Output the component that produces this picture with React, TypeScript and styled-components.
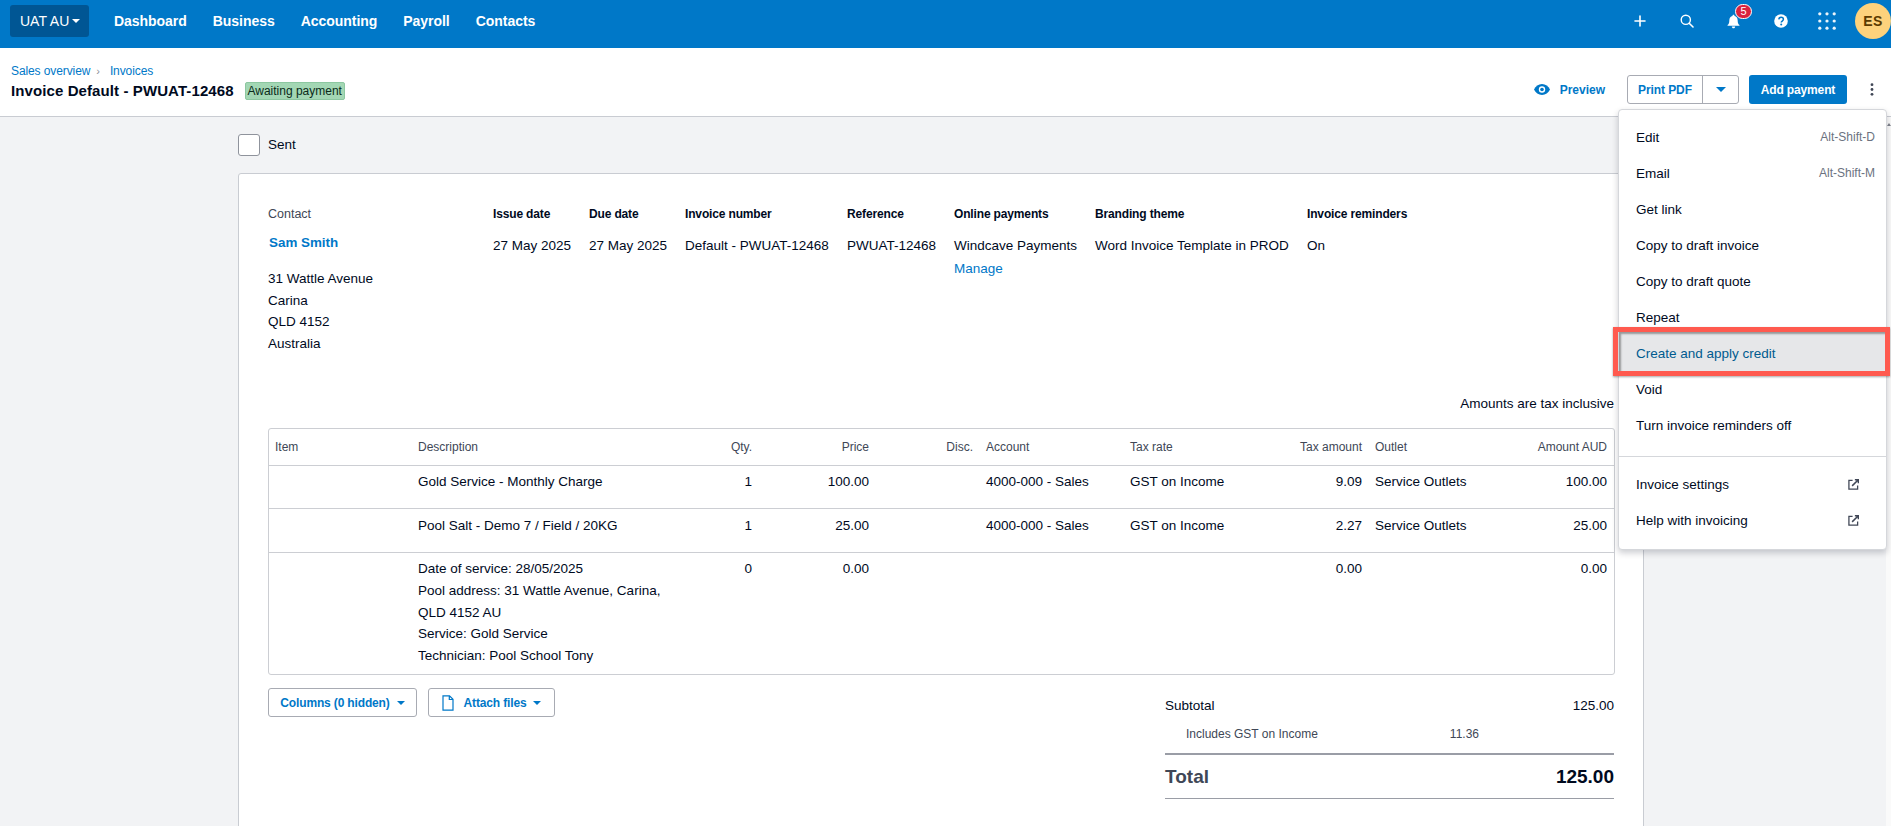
import React from "react";
import styled, { createGlobalStyle } from "styled-components";

const Global = createGlobalStyle`
  html, body { margin: 0; padding: 0; height: 100%; overflow: hidden; background: #f2f3f5; }
  body { font-family: "Liberation Sans", Arial, sans-serif; font-size: 13.5px; color: #000a1e; }
  * { box-sizing: border-box; }
`;

const Page = styled.div`
  position: relative;
  height: 826px;
  overflow: hidden;
`;

const TopBar = styled.header`
  height: 48px;
  background: #0078c8;
  display: flex;
  align-items: center;
  padding: 0 0 0 10px;
`;
const OrgButton = styled.div`
  width: 79px;
  height: 32px;
  margin-top: -6px;
  background: #005694;
  border-radius: 3px;
  color: #fff;
  font-size: 14px;
  display: flex;
  align-items: center;
  padding-left: 10px;
  gap: 3px;
`;
const CaretDown = styled.span<{ $color?: string; $size?: number }>`
  display: inline-block;
  width: 0;
  height: 0;
  border-left: ${(p) => p.$size ?? 4}px solid transparent;
  border-right: ${(p) => p.$size ?? 4}px solid transparent;
  border-top: ${(p) => p.$size ?? 4}px solid ${(p) => p.$color ?? "#fff"};
`;
const NavLinks = styled.nav`
  display: flex;
  margin-left: 25px;
  margin-top: -7px;
  gap: 26px;
`;
const NavLink = styled.a`
  color: #fff;
  font-size: 14px;
  font-weight: 700;
  letter-spacing: -0.04px;
`;
const TopIcons = styled.div`
  margin-left: auto;
  display: flex;
  align-items: center;
  height: 42px;
  margin-top: -6px;
`;
const IconSlot = styled.div<{ $w: number }>`
  position: relative;
  width: ${(p) => p.$w}px;
  height: 42px;
  display: flex;
  align-items: center;
  justify-content: center;
`;
const Badge = styled.span`
  position: absolute;
  top: 4px;
  left: 25px;
  width: 17px;
  height: 15px;
  border-radius: 8px;
  background: #d9233f;
  border: 1px solid #fff;
  color: #fff;
  font-size: 11px;
  line-height: 13px;
  text-align: center;
`;
const Avatar = styled.div`
  width: 36px;
  height: 36px;
  margin-left: 6px;
  border-radius: 50%;
  background: #fdd27c;
  color: #5b3a00;
  font-size: 14px;
  font-weight: 700;
  letter-spacing: 0.5px;
  display: flex;
  align-items: center;
  justify-content: center;
`;

const SubHeader = styled.div`
  height: 69px;
  background: #fff;
  border-bottom: 1px solid #c9ccd2;
  display: flex;
  align-items: flex-start;
  padding: 15px 0 0 11px;
`;
const TitleBlock = styled.div`
  display: flex;
  flex-direction: column;
`;
const Crumbs = styled.div`
  display: flex;
  align-items: center;
  font-size: 12px;
  line-height: 16px;
  letter-spacing: -0.1px;
  color: #0078c8;
`;
const CrumbSep = styled.span`
  color: #8a8f99;
  margin: 0 10px 0 6px;
  font-size: 11px;
`;
const TitleRow = styled.div`
  display: flex;
  align-items: center;
  margin-top: 3px;
`;
const Title = styled.h1`
  margin: 0;
  font-size: 15px;
  line-height: 18px;
  font-weight: 700;
  color: #000a1e;
  letter-spacing: 0.1px;
`;
const StatusBadge = styled.span`
  margin-left: 11px;
  width: 100px;
  height: 18px;
  background: #a3d7b4;
  border: 1px solid #8cc7a0;
  border-radius: 2px;
  font-size: 12px;
  line-height: 16px;
  text-align: center;
  color: #0b2b1a;
`;
const Actions = styled.div`
  margin-left: auto;
  display: flex;
  align-items: center;
  margin-top: 12px;
`;
const PreviewLink = styled.a`
  display: flex;
  align-items: center;
  gap: 10px;
  color: #0078c8;
  font-size: 12px;
  font-weight: 700;
  margin-right: 22px;
`;
const SplitButton = styled.div`
  display: flex;
  width: 112px;
  height: 29px;
  border: 1px solid #a8abb3;
  border-radius: 3px;
  background: #fff;
`;
const SplitMain = styled.div`
  width: 75px;
  display: flex;
  align-items: center;
  justify-content: center;
  color: #0078c8;
  font-size: 12px;
  font-weight: 700;
  letter-spacing: -0.1px;
  border-right: 1px solid #a8abb3;
`;
const SplitCaret = styled.div`
  flex: 1;
  display: flex;
  align-items: center;
  justify-content: center;
`;
const PrimaryButton = styled.div`
  margin-left: 10px;
  width: 98px;
  height: 29px;
  background: #0078c8;
  border-radius: 3px;
  color: #fff;
  font-size: 12px;
  font-weight: 700;
  letter-spacing: -0.15px;
  display: flex;
  align-items: center;
  justify-content: center;
`;
const Kebab = styled.div`
  width: 44px;
  height: 29px;
  padding-left: 6px;
  display: flex;
  align-items: center;
  justify-content: center;
`;

const Content = styled.main`
  padding: 17px 0 0 238px;
  width: 1644px;
`;
const SentRow = styled.label`
  display: flex;
  align-items: center;
  gap: 8px;
  height: 22px;
  font-size: 13.5px;
  line-height: 20px;
`;
const CheckBox = styled.span`
  width: 22px;
  height: 22px;
  background: #fff;
  border: 1px solid #8f939c;
  border-radius: 3px;
`;
const Card = styled.section`
  margin-top: 17px;
  height: 800px;
  background: #fff;
  border: 1px solid #c9ccd2;
  border-radius: 3px;
  padding: 32px 29px 0 29px;
`;
const MetaRow = styled.div`
  display: flex;
`;
const MetaCol = styled.div<{ $w: number }>`
  width: ${(p) => p.$w}px;
  flex: none;
`;
const MetaLabel = styled.div<{ $muted?: boolean }>`
  font-size: ${(p) => (p.$muted ? "12.5px" : "12px")};
  line-height: 16px;
  font-weight: ${(p) => (p.$muted ? 400 : 700)};
  letter-spacing: ${(p) => (p.$muted ? "0" : "-0.15px")};
  color: ${(p) => (p.$muted ? "#404756" : "#000a1e")};
`;
const MetaValue = styled.div`
  margin-top: 16px;
  line-height: 16px;
`;
const BlueLink = styled.a`
  display: block;
  margin-top: 7px;
  color: #0078c8;
  line-height: 16px;
`;
const ContactName = styled.a`
  display: block;
  margin: 13px 0 0 1px;
  color: #0078c8;
  font-size: 13.4px;
  font-weight: 700;
  line-height: 16px;
`;
const Address = styled.div`
  margin-top: 17px;
  line-height: 21.6px;
`;
const TaxNote = styled.div`
  text-align: right;
  margin-top: 42px;
  line-height: 16px;
`;
const LineTable = styled.div`
  margin-top: 16px;
  border: 1px solid #ccced3;
  border-radius: 3px;
  width: 1347px;
`;
const GRID = "143px 288px 59px 117px 104px 144px 126px 119px 120px 1fr";
const HeadRow = styled.div`
  display: grid;
  grid-template-columns: ${GRID};
  height: 37px;
  align-items: center;
  font-size: 12px;
  color: #404756;
  border-bottom: 1px solid #ccced3;
`;
const BodyRow = styled.div<{ $h: number; $pad?: number; $last?: boolean }>`
  display: grid;
  grid-template-columns: ${GRID};
  min-height: ${(p) => p.$h}px;
  padding-top: ${(p) => p.$pad ?? 8}px;
  line-height: 16px;
  border-bottom: ${(p) => (p.$last ? "none" : "1px solid #ccced3")};
`;
const Cell = styled.div<{ $right?: boolean }>`
  padding: 0 7px 0 6px;
  text-align: ${(p) => (p.$right ? "right" : "left")};
`;
const NoteLine = styled.div`
  line-height: 21.6px;
  margin-top: -3px;
  margin-bottom: 3px;
`;
const BelowTable = styled.div`
  display: flex;
  justify-content: space-between;
  margin-top: 13px;
  width: 1346px;
`;
const BtnRow = styled.div`
  display: flex;
  gap: 11px;
`;
const OutlineBtn = styled.div<{ $w: number }>`
  width: ${(p) => p.$w}px;
  height: 29px;
  border: 1px solid #a8abb3;
  border-radius: 3px;
  background: #fff;
  color: #0078c8;
  font-size: 12px;
  font-weight: 700;
  letter-spacing: -0.15px;
  display: flex;
  align-items: center;
  justify-content: center;
  gap: 7px;
`;
const AttachLabel = styled.span`
  margin-left: 3px;
`;
const Totals = styled.div`
  width: 449px;
  margin-top: 9px;
`;
const SubRow = styled.div`
  display: flex;
  justify-content: space-between;
  line-height: 16px;
  padding-top: 1px;
`;
const GstRow = styled.div`
  display: flex;
  justify-content: space-between;
  font-size: 12px;
  line-height: 16px;
  color: #404756;
  margin-top: 12px;
  padding: 0 135px 0 21px;
`;
const TotalRow = styled.div`
  display: flex;
  justify-content: space-between;
  margin-top: 11px;
  border-top: 2px solid #9a9da6;
  border-bottom: 1px solid #9a9da6;
  height: 46px;
  align-items: center;
  font-size: 19px;
  font-weight: 700;
`;
const TotalLabel = styled.span`
  color: #404756;
`;

const ScrollTrack = styled.div`
  position: absolute;
  top: 117px;
  right: 0;
  bottom: 0;
  width: 5px;
  background: #fafafa;
`;
const ScrollNub = styled.span`
  position: absolute;
  top: 6px;
  left: 1px;
  width: 0;
  height: 0;
  border-left: 2px solid transparent;
  border-right: 2px solid transparent;
  border-bottom: 3px solid #7d818a;
`;
const Menu = styled.div`
  position: absolute;
  top: 109px;
  left: 1618px;
  width: 269px;
  height: 441px;
  background: #fff;
  border: 1px solid #d5d7db;
  border-radius: 4px;
  box-shadow: 0 3px 6px rgba(0, 10, 30, 0.2);
  padding: 9px 0 0;
  isolation: isolate;
`;
const MenuItem = styled.div<{ $active?: boolean }>`
  position: relative;
  height: 36px;
  display: flex;
  align-items: center;
  justify-content: space-between;
  padding: 0 11px 0 17px;
  color: ${(p) => (p.$active ? "#005b8f" : "#000a1e")};
  ${(p) =>
    p.$active &&
    `
    &::before {
      content: "";
      position: absolute;
      z-index: -1;
      inset: -3px 0 -1px 0;
      background: #e6e7e9;
      box-shadow: inset 2px 2px 2px rgba(0, 0, 0, 0.35);
    }
    &::after {
      content: "";
      position: absolute;
      inset: -8px -4px -5px -6px;
      border: 5px solid #ff5a4f;
      box-shadow: 0 1px 2px rgba(0,0,0,0.35);
      pointer-events: none;
    }
  `}
`;
const Shortcut = styled.span`
  font-size: 12px;
  color: #6b7280;
`;
const MenuDivider = styled.div`
  height: 1px;
  background: #d5d7db;
  margin: 13px 0 9px;
`;
const ExtIcon = styled.span`
  display: flex;
  margin-right: 16px;
`;

const ExternalGlyph = () => (
  <svg width="11" height="11" viewBox="0 0 12 12" fill="none">
    <path d="M5 1.500H1v9.500h9.500V7" stroke="#404756" strokeWidth="1.400" />
    <path d="M4.500 7.500 11 1M7.500 .7H11.300V4.500" stroke="#404756" strokeWidth="1.600" />
  </svg>
);

const items: [string, string?][] = [
  ["Edit", "Alt-Shift-D"],
  ["Email", "Alt-Shift-M"],
  ["Get link"],
  ["Copy to draft invoice"],
  ["Copy to draft quote"],
  ["Repeat"],
  ["Create and apply credit"],
  ["Void"],
  ["Turn invoice reminders off"],
];

const rows = [
  { h: 43, pad: 8, cells: ["", "Gold Service - Monthly Charge", "1", "100.00", "", "4000-000 - Sales", "GST on Income", "9.09", "Service Outlets", "100.00"] },
  { h: 44, pad: 9, cells: ["", "Pool Salt - Demo 7 / Field / 20KG", "1", "25.00", "", "4000-000 - Sales", "GST on Income", "2.27", "Service Outlets", "25.00"] },
];
const rightCols = new Set([2, 3, 4, 7, 9]);
const heads = ["Item", "Description", "Qty.", "Price", "Disc.", "Account", "Tax rate", "Tax amount", "Outlet", "Amount AUD"];

export default function App() {
  return (
    <Page>
      <Global />
      <TopBar>
        <OrgButton>
          UAT AU <CaretDown />
        </OrgButton>
        <NavLinks>
          <NavLink>Dashboard</NavLink>
          <NavLink>Business</NavLink>
          <NavLink>Accounting</NavLink>
          <NavLink>Payroll</NavLink>
          <NavLink>Contacts</NavLink>
        </NavLinks>
        <TopIcons>
          <IconSlot $w={47}>
            <svg width="12" height="12" viewBox="0 0 12 12">
              <path d="M6 1v10M1 6h10" stroke="#fff" strokeWidth="1.600" strokeLinecap="round" />
            </svg>
          </IconSlot>
          <IconSlot $w={47}>
            <svg width="14" height="14" viewBox="0 0 14 14" fill="none">
              <circle cx="5.800" cy="5.800" r="4.600" stroke="#fff" strokeWidth="1.400" />
              <path d="M9.200 9.200 13 13" stroke="#fff" strokeWidth="1.600" strokeLinecap="round" />
            </svg>
          </IconSlot>
          <IconSlot $w={47}>
            <svg width="13" height="15" viewBox="0 0 14 16" fill="#fff">
              <path d="M7 .6c.7 0 1.100.5 1.100 1.100v.4C10.300 2.600 11.500 4.400 11.500 6.800c0 3 .8 4 1.900 5.100v.7H.6v-.7c1.100-1.100 1.900-2.100 1.900-5.100 0-2.400 1.200-4.200 3.400-4.700v-.4C5.900 1.100 6.300.6 7 .6z" />
              <path d="M5.200 13.500h3.600c0 1.100-.8 1.900-1.800 1.900s-1.800-.8-1.800-1.900z" />
            </svg>
            <Badge>5</Badge>
          </IconSlot>
          <IconSlot $w={47}>
            <svg width="14" height="14" viewBox="0 0 14 14">
              <circle cx="7" cy="7" r="6.800" fill="#fff" />
              <path d="M4.800 5.400C4.900 4 5.900 3.200 7.100 3.200c1.300 0 2.300.8 2.300 2 0 1.900-2.200 1.800-2.200 3.400" fill="none" stroke="#0078c8" strokeWidth="1.500" />
              <circle cx="7.200" cy="10.500" r="1" fill="#0078c8" />
            </svg>
          </IconSlot>
          <IconSlot $w={45}>
            <svg width="18" height="18" viewBox="0 0 20 20" fill="#fff" opacity="0.92">
              {[2, 10, 18].flatMap((y) =>
                [2, 10, 18].map((x) => <circle key={`${x}-${y}`} cx={x} cy={y} r="1.800" />)
              )}
            </svg>
          </IconSlot>
          <Avatar>ES</Avatar>
        </TopIcons>
      </TopBar>

      <SubHeader>
        <TitleBlock>
          <Crumbs>
            <span>Sales overview</span>
            <CrumbSep>›</CrumbSep>
            <span>Invoices</span>
          </Crumbs>
          <TitleRow>
            <Title>Invoice Default - PWUAT-12468</Title>
            <StatusBadge>Awaiting payment</StatusBadge>
          </TitleRow>
        </TitleBlock>
        <Actions>
          <PreviewLink>
            <svg width="16" height="11" viewBox="0 0 16 11">
              <path d="M8 0C4.500 0 1.600 2.200 0 5.500 1.600 8.800 4.500 11 8 11s6.400-2.200 8-5.500C14.400 2.200 11.500 0 8 0z" fill="#0078c8" />
              <circle cx="8" cy="5.500" r="3.200" fill="#fff" />
              <circle cx="8" cy="5.500" r="1.800" fill="#0078c8" />
            </svg>
            Preview
          </PreviewLink>
          <SplitButton>
            <SplitMain>Print PDF</SplitMain>
            <SplitCaret>
              <CaretDown $color="#0078c8" $size={5} />
            </SplitCaret>
          </SplitButton>
          <PrimaryButton>Add payment</PrimaryButton>
          <Kebab>
            <svg width="4" height="13" viewBox="0 0 4 13" fill="#404756">
              <circle cx="2" cy="1.700" r="1.400" />
              <circle cx="2" cy="6.500" r="1.400" />
              <circle cx="2" cy="11.300" r="1.400" />
            </svg>
          </Kebab>
        </Actions>
      </SubHeader>

      <Content>
        <SentRow>
          <CheckBox />
          Sent
        </SentRow>
        <Card>
          <MetaRow>
            <MetaCol $w={225}>
              <MetaLabel $muted>Contact</MetaLabel>
              <ContactName>Sam Smith</ContactName>
              <Address>
                31 Wattle Avenue
                <br />
                Carina
                <br />
                QLD 4152
                <br />
                Australia
              </Address>
            </MetaCol>
            <MetaCol $w={96}>
              <MetaLabel>Issue date</MetaLabel>
              <MetaValue>27 May 2025</MetaValue>
            </MetaCol>
            <MetaCol $w={96}>
              <MetaLabel>Due date</MetaLabel>
              <MetaValue>27 May 2025</MetaValue>
            </MetaCol>
            <MetaCol $w={162}>
              <MetaLabel>Invoice number</MetaLabel>
              <MetaValue>Default - PWUAT-12468</MetaValue>
            </MetaCol>
            <MetaCol $w={107}>
              <MetaLabel>Reference</MetaLabel>
              <MetaValue>PWUAT-12468</MetaValue>
            </MetaCol>
            <MetaCol $w={141}>
              <MetaLabel>Online payments</MetaLabel>
              <MetaValue>Windcave Payments</MetaValue>
              <BlueLink>Manage</BlueLink>
            </MetaCol>
            <MetaCol $w={212}>
              <MetaLabel>Branding theme</MetaLabel>
              <MetaValue>Word Invoice Template in PROD</MetaValue>
            </MetaCol>
            <MetaCol $w={120}>
              <MetaLabel>Invoice reminders</MetaLabel>
              <MetaValue>On</MetaValue>
            </MetaCol>
          </MetaRow>

          <TaxNote>Amounts are tax inclusive</TaxNote>

          <LineTable>
            <HeadRow>
              {heads.map((h, i) => (
                <Cell key={h} $right={rightCols.has(i)}>
                  {h}
                </Cell>
              ))}
            </HeadRow>
            {rows.map((r) => (
              <BodyRow key={r.cells[1]} $h={r.h} $pad={r.pad}>
                {r.cells.map((c, i) => (
                  <Cell key={i} $right={rightCols.has(i)}>
                    {c}
                  </Cell>
                ))}
              </BodyRow>
            ))}
            <BodyRow $h={121} $last>
              <Cell />
              <Cell>
                <NoteLine>Date of service: 28/05/2025</NoteLine>
                <NoteLine>Pool address: 31 Wattle Avenue, Carina,</NoteLine>
                <NoteLine>QLD 4152 AU</NoteLine>
                <NoteLine>Service: Gold Service</NoteLine>
                <NoteLine>Technician: Pool School Tony</NoteLine>
              </Cell>
              <Cell $right>0</Cell>
              <Cell $right>0.00</Cell>
              <Cell />
              <Cell />
              <Cell />
              <Cell $right>0.00</Cell>
              <Cell />
              <Cell $right>0.00</Cell>
            </BodyRow>
          </LineTable>

          <BelowTable>
            <BtnRow>
              <OutlineBtn $w={149}>
                Columns (0 hidden) <CaretDown $color="#0078c8" />
              </OutlineBtn>
              <OutlineBtn $w={127}>
                <svg width="12" height="16" viewBox="0 0 12 16" fill="none">
                  <path d="M1 .8h6.500L11 4.300v10.900H1zM7.300 1v3.500H11" stroke="#0078c8" strokeWidth="1.200" />
                </svg>
                <AttachLabel>Attach files</AttachLabel> <CaretDown $color="#0078c8" />
              </OutlineBtn>
            </BtnRow>
            <Totals>
              <SubRow>
                <span>Subtotal</span>
                <span>125.00</span>
              </SubRow>
              <GstRow>
                <span>Includes GST on Income</span>
                <span>11.36</span>
              </GstRow>
              <TotalRow>
                <TotalLabel>Total</TotalLabel>
                <span>125.00</span>
              </TotalRow>
            </Totals>
          </BelowTable>
        </Card>
      </Content>

      <ScrollTrack>
        <ScrollNub />
      </ScrollTrack>

      <Menu>
        {items.map(([label, sc]) => (
          <MenuItem key={label} $active={label === "Create and apply credit"}>
            <span>{label}</span>
            {sc && <Shortcut>{sc}</Shortcut>}
          </MenuItem>
        ))}
        <MenuDivider />
        <MenuItem>
          <span>Invoice settings</span>
          <ExtIcon>
            <ExternalGlyph />
          </ExtIcon>
        </MenuItem>
        <MenuItem>
          <span>Help with invoicing</span>
          <ExtIcon>
            <ExternalGlyph />
          </ExtIcon>
        </MenuItem>
      </Menu>
    </Page>
  );
}
